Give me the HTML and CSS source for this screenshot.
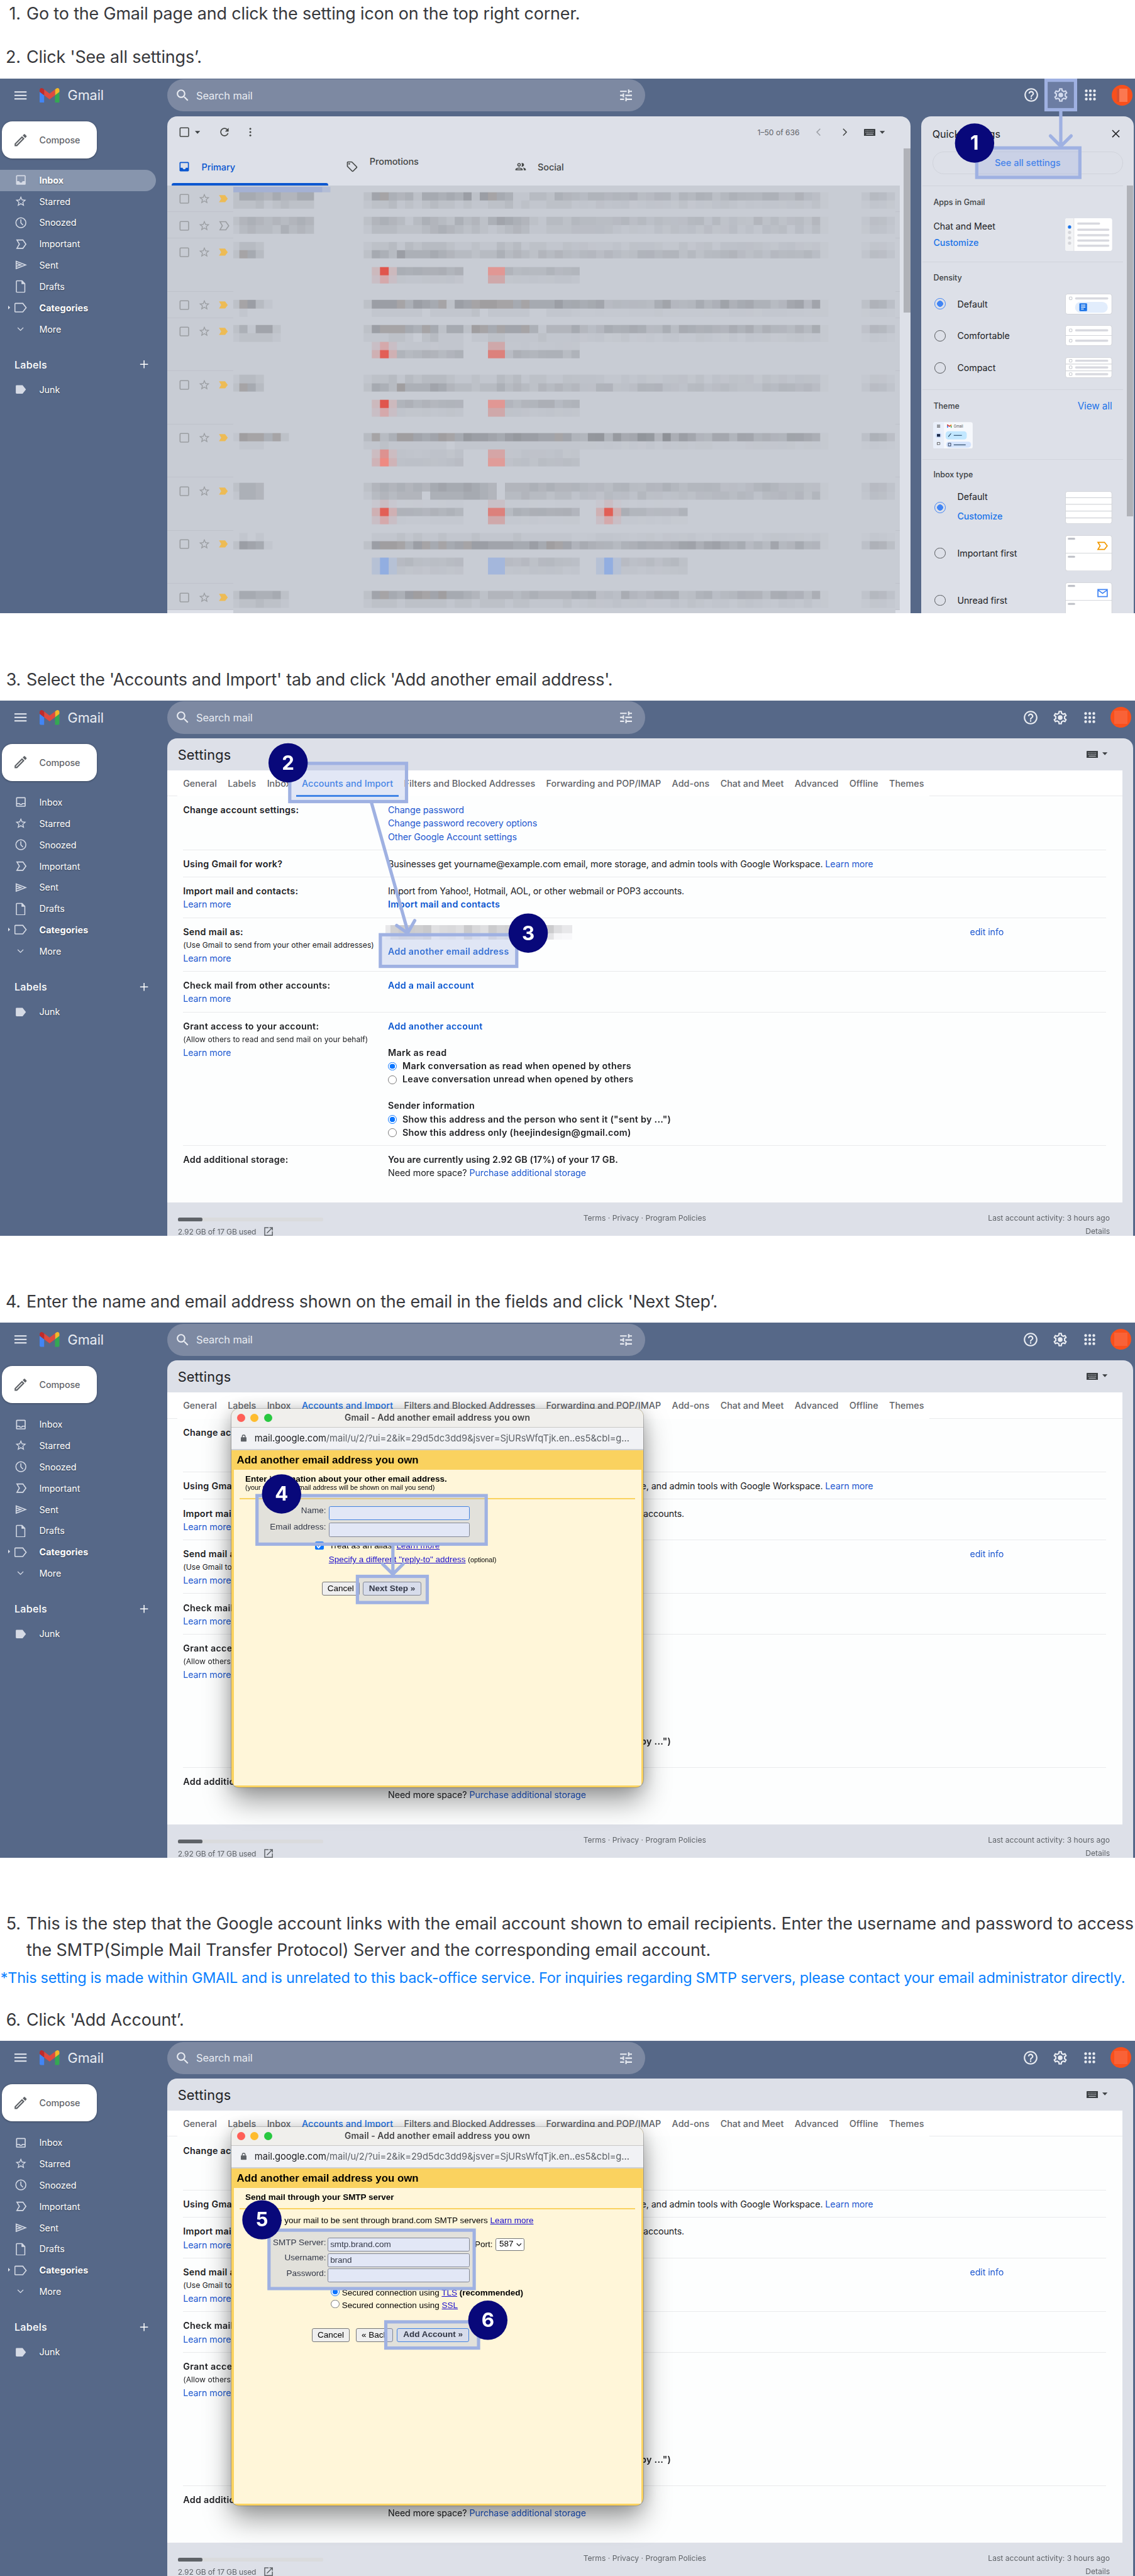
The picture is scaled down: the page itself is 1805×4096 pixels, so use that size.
FILE: index.html
```html
<!DOCTYPE html>
<html lang="en">
<head>
<meta charset="utf-8">
<title>Gmail: send mail as another address</title>
<link rel="stylesheet" href="styles.css">
</head>
<body>

<svg class="sprite" aria-hidden="true">
  <symbol id="i-menu" viewBox="0 0 24 24"><path d="M0 4h24v2.6H0zM0 10.7h24v2.6H0zM0 17.4h24V20H0z"/></symbol>
  <symbol id="i-gmail" viewBox="52 42 88 66"><path fill="#4285f4" d="M58 108h14V74L52 59v43c0 3.32 2.69 6 6 6"/><path fill="#34a853" d="M120 108h14c3.32 0 6-2.69 6-6V59l-20 15"/><path fill="#f3b829" d="M120 48v26l20-15v-8c0-7.42-8.47-11.65-14.4-7.2"/><path fill="#de4a3f" d="M72 74V48l24 18 24-18v26L96 92"/><path fill="#bf2b2b" d="M52 51v8l20 15V48l-5.6-4.2c-5.94-4.45-14.4-.22-14.4 7.2"/></symbol>
  <symbol id="i-search" viewBox="0 0 24 24"><path d="M15.5 14h-.79l-.28-.27C15.41 12.59 16 11.11 16 9.5 16 5.91 13.09 3 9.5 3S3 5.91 3 9.5 5.91 16 9.5 16c1.61 0 3.09-.59 4.23-1.57l.27.28v.79l5 4.99L20.49 19l-4.99-5zm-6 0C7.01 14 5 11.99 5 9.5S7.01 5 9.5 5 14 7.01 14 9.5 11.99 14 9.5 14z"/></symbol>
  <symbol id="i-tune" viewBox="0 0 24 24"><path d="M3 17v2h6v-2H3zM3 5v2h10V5H3zm10 16v-2h8v-2h-8v-2h-2v6h2zM7 9v2H3v2h4v2h2V9H7zm14 4v-2H11v2h10zm-6-4h2V7h4V5h-4V3h-2v6z"/></symbol>
  <symbol id="i-help" viewBox="0 0 24 24"><path d="M11 18h2v-2h-2v2zm1-16C6.48 2 2 6.48 2 12s4.48 10 10 10 10-4.48 10-10S17.52 2 12 2zm0 18c-4.41 0-8-3.59-8-8s3.59-8 8-8 8 3.59 8 8-3.59 8-8 8zm0-14c-2.21 0-4 1.79-4 4h2c0-1.1.9-2 2-2s2 .9 2 2c0 2-3 1.75-3 5h2c0-2.25 3-2.5 3-5 0-2.21-1.79-4-4-4z"/></symbol>
  <symbol id="i-gear" viewBox="0 0 24 24"><path d="M19.43 12.98c.04-.32.07-.64.07-.98 0-.34-.03-.66-.07-.98l2.11-1.65c.19-.15.24-.42.12-.64l-2-3.46c-.09-.16-.26-.25-.44-.25-.06 0-.12.01-.17.03l-2.49 1c-.52-.4-1.08-.73-1.69-.98l-.38-2.65C14.46 2.18 14.25 2 14 2h-4c-.25 0-.46.18-.49.42l-.38 2.65c-.61.25-1.17.59-1.69.98l-2.49-1c-.06-.02-.12-.03-.18-.03-.17 0-.34.09-.43.25l-2 3.46c-.13.22-.07.49.12.64l2.11 1.65c-.04.32-.07.65-.07.98 0 .33.03.66.07.98l-2.11 1.65c-.19.15-.24.42-.12.64l2 3.46c.09.16.26.25.44.25.06 0 .12-.01.17-.03l2.49-1c.52.4 1.08.73 1.69.98l.38 2.65c.03.24.24.42.49.42h4c.25 0 .46-.18.49-.42l.38-2.65c.61-.25 1.17-.59 1.69-.98l2.49 1c.06.02.12.03.18.03.17 0 .34-.09.43-.25l2-3.46c.12-.22.07-.49-.12-.64l-2.11-1.65zm-1.98-1.71c.04.31.05.52.05.73 0 .21-.02.43-.05.73l-.14 1.13.89.7 1.08.84-.7 1.21-1.27-.51-1.04-.42-.9.68c-.43.32-.84.56-1.25.73l-1.06.43-.16 1.13-.2 1.35h-1.4l-.19-1.35-.16-1.13-1.06-.43c-.43-.18-.83-.41-1.23-.71l-.91-.7-1.06.43-1.27.51-.7-1.21 1.08-.84.89-.7-.14-1.13c-.03-.31-.05-.54-.05-.74s.02-.43.05-.73l.14-1.13-.89-.7-1.08-.84.7-1.21 1.27.51 1.04.42.9-.68c.43-.32.84-.56 1.25-.73l1.06-.43.16-1.13.2-1.35h1.39l.19 1.35.16 1.13 1.06.43c.43.18.83.41 1.23.71l.91.7 1.06-.43 1.27-.51.7 1.21-1.07.85-.89.7.14 1.13z"/><circle cx="12" cy="12" r="3.5"/></symbol>
  <symbol id="i-grid" viewBox="0 0 24 24"><circle cx="6" cy="6" r="2"/><circle cx="12" cy="6" r="2"/><circle cx="18" cy="6" r="2"/><circle cx="6" cy="12" r="2"/><circle cx="12" cy="12" r="2"/><circle cx="18" cy="12" r="2"/><circle cx="6" cy="18" r="2"/><circle cx="12" cy="18" r="2"/><circle cx="18" cy="18" r="2"/></symbol>
  <symbol id="i-pencil" viewBox="0 0 24 24"><path d="M14.06 9.02l.92.92L5.92 19H5v-.92l9.06-9.06M17.66 3c-.25 0-.51.1-.7.29l-1.83 1.83 3.75 3.75 1.83-1.83c.39-.39.39-1.02 0-1.41l-2.34-2.34c-.2-.2-.45-.29-.71-.29zm-3.6 3.19L3 17.25V21h3.75L17.81 9.94l-3.75-3.75z"/></symbol>
  <symbol id="i-inbox-fill" viewBox="0 0 24 24"><path d="M19 3H5c-1.1 0-2 .9-2 2v14c0 1.1.9 2 2 2h14c1.1 0 2-.9 2-2V5c0-1.1-.9-2-2-2zm0 11h-4c0 1.66-1.35 3-3 3s-3-1.34-3-3H5V5h14v9z"/></symbol>
  <symbol id="i-inbox" viewBox="0 0 24 24"><path d="M19 3H5c-1.1 0-2 .9-2 2v14c0 1.1.9 2 2 2h14c1.1 0 2-.9 2-2V5c0-1.1-.9-2-2-2zm0 16H5v-3h3.56c.69 1.19 1.97 2 3.45 2s2.75-.81 3.45-2H19v3zm0-5h-4.99c0 1.1-.9 2-2 2s-2-.9-2-2H5V5h14v9z"/></symbol>
  <symbol id="i-star" viewBox="0 0 24 24"><path d="M22 9.24l-7.19-.62L12 2 9.19 8.63 2 9.24l5.46 4.73L5.82 21 12 17.27 18.18 21l-1.63-7.03L22 9.24zM12 15.4l-3.76 2.27 1-4.28-3.32-2.88 4.38-.38L12 6.1l1.71 4.04 4.38.38-3.32 2.88 1 4.28L12 15.4z"/></symbol>
  <symbol id="i-clock" viewBox="0 0 24 24"><g fill="none" stroke="currentColor" stroke-width="1.8"><circle cx="12" cy="12" r="9.3"/><path d="M12 5.5v6.8l4 4"/></g></symbol>
  <symbol id="i-important" viewBox="0 0 24 24"><path fill="none" stroke="currentColor" stroke-width="1.9" d="M4.6 4.2h11.2l5.6 7.8-5.6 7.8H4.6L9.2 12z"/></symbol>
  <symbol id="i-marker" viewBox="0 0 24 24"><path d="M3 4.6h12c.6 0 1 .2 1.4.7L21.4 12l-5 6.7c-.4.5-.8.7-1.4.7H3L7.6 12z"/></symbol>
  <symbol id="i-send" viewBox="0 0 24 24"><path fill="none" stroke="currentColor" stroke-width="1.9" d="M3.2 5.2L21 12 3.2 18.8zM3.2 9.2L12 12l-8.8 2.8"/></symbol>
  <symbol id="i-draft" viewBox="0 0 24 24"><path fill="none" stroke="currentColor" stroke-width="1.8" d="M5 1.8h9.2L19.4 7v15.2a1 1 0 0 1-1 1H4.6a1 1 0 0 1-1-1V2.8a1 1 0 0 1 1-1z"/><path d="M13.2 1.6v6.2h6.4z"/></symbol>
  <symbol id="i-tag" viewBox="0 0 24 24"><path fill="none" stroke="currentColor" stroke-width="1.9" d="M2 4h13.6l6.3 8-6.3 8H2a1.2 1.2 0 0 1-1.2-1.2V5.2A1.2 1.2 0 0 1 2 4z"/></symbol>
  <symbol id="i-tag-fill" viewBox="0 0 24 24"><path d="M4.2 4h11l6.3 8-6.3 8h-11a1.7 1.7 0 0 1-1.7-1.7V5.7A1.7 1.7 0 0 1 4.2 4z"/></symbol>
  <symbol id="i-down" viewBox="0 0 24 24"><path fill="none" stroke="currentColor" stroke-width="2" d="M5 8.5l7 7 7-7"/></symbol>
  <symbol id="i-prev" viewBox="0 0 24 24"><path fill="none" stroke="currentColor" stroke-width="2" d="M15 5l-7 7 7 7"/></symbol>
  <symbol id="i-next" viewBox="0 0 24 24"><path fill="none" stroke="currentColor" stroke-width="2" d="M9 5l7 7-7 7"/></symbol>
  <symbol id="i-plus" viewBox="0 0 24 24"><path d="M10.7 3h2.2v7.9h8v2.2h-8v8h-2.2v-8h-8v-2.2h8z"/></symbol>
  <symbol id="i-close" viewBox="0 0 24 24"><path fill="none" stroke="currentColor" stroke-width="2" d="M5 5l14 14M19 5L5 19"/></symbol>
  <symbol id="i-check" viewBox="0 0 24 24"><rect x="4" y="4" width="16.4" height="16.4" rx="1.5" fill="none" stroke="currentColor" stroke-width="1.9"/></symbol>
  <symbol id="i-refresh" viewBox="0 0 24 24"><path d="M17.65 6.35C16.2 4.9 14.21 4 12 4c-4.42 0-7.99 3.58-7.99 8s3.57 8 7.99 8c3.73 0 6.84-2.55 7.73-6h-2.08c-.82 2.33-3.04 4-5.65 4-3.31 0-6-2.69-6-6s2.69-6 6-6c1.66 0 3.14.69 4.22 1.78L13 11h7V4l-2.35 2.35z"/></symbol>
  <symbol id="i-dots" viewBox="0 0 24 24"><circle cx="12" cy="5" r="2"/><circle cx="12" cy="12" r="2"/><circle cx="12" cy="19" r="2"/></symbol>
  <symbol id="i-promo" viewBox="0 0 24 24"><path d="M21.41 11.58l-9-9C12.05 2.22 11.55 2 11 2H4c-1.1 0-2 .9-2 2v7c0 .55.22 1.05.59 1.42l9 9c.36.36.86.58 1.41.58s1.05-.22 1.41-.59l7-7c.37-.36.59-.86.59-1.41s-.23-1.06-.59-1.42zM13 20.01L4 11V4h7l9 9-7 7.01z"/><circle cx="6.5" cy="6.5" r="1.5"/></symbol>
  <symbol id="i-people" viewBox="0 0 24 24"><path d="M9 13.75c-2.34 0-7 1.17-7 3.5V19h14v-1.75c0-2.33-4.66-3.5-7-3.5zM4.34 17c.84-.58 2.87-1.25 4.66-1.25s3.82.67 4.66 1.25H4.34zM9 12c1.93 0 3.5-1.57 3.5-3.5S10.93 5 9 5 5.5 6.57 5.5 8.5 7.07 12 9 12zm0-5c.83 0 1.5.67 1.5 1.5S9.83 10 9 10s-1.5-.67-1.5-1.5S8.17 7 9 7zm7.04 6.81c1.16.84 1.96 1.96 1.96 3.44V19h4v-1.75c0-2.02-3.5-3.17-5.96-3.44zM15 12c1.93 0 3.5-1.57 3.5-3.5S16.93 5 15 5c-.54 0-1.04.13-1.5.35.63.89 1 1.98 1 3.15s-.37 2.26-1 3.15c.46.22.96.35 1.5.35z"/></symbol>
  <symbol id="i-keyboard" viewBox="0 0 21 13"><rect width="21" height="13" rx="1"/><path stroke="#dde0e8" stroke-width="1.3" stroke-dasharray="1.3 1.3" d="M3 3.5h15M3 6.3h15"/><path stroke="#dde0e8" stroke-width="1.2" d="M4 9.6h13"/></symbol>
  <symbol id="i-caret" viewBox="0 0 10 6"><path d="M0 0h10L5 5.6z"/></symbol>
  <symbol id="i-open" viewBox="0 0 24 24"><path d="M19 19H5V5h7V3H3v18h18v-9h-2v7zM14 3v2h3.6l-9.8 9.8 1.4 1.4L19 6.4V10h2V3h-7z"/></symbol>
  <symbol id="i-lock" viewBox="0 0 12 15"><rect y="5.5" width="12" height="9" rx="1.3"/><path fill="none" stroke="currentColor" stroke-width="1.8" d="M3 6V3.8a3 3 0 0 1 6 0V6"/></symbol>
</svg>

<template id="topbar">
  <header class="topbar">
    <div class="brand">
      <svg class="menu"><use href="#i-menu"/></svg>
      <svg class="logo"><use href="#i-gmail"/></svg>
      <span class="wordmark">Gmail</span>
    </div>
    <div class="search">
      <svg class="search-icon"><use href="#i-search"/></svg>
      <span class="search-text">Search mail</span>
      <svg class="tune"><use href="#i-tune"/></svg>
    </div>
    <div class="tools">
      <svg class="tool"><use href="#i-help"/></svg>
      <svg class="tool"><use href="#i-gear"/></svg>
      <svg class="tool"><use href="#i-grid"/></svg>
      <span class="avatar"><i class="avatar-blur"></i></span>
    </div>
  </header>
</template>

<template id="sidebar">
  <nav class="sidebar">
    <div class="compose"><svg class="pencil"><use href="#i-pencil"/></svg>Compose</div>
    <div class="folder folder-inbox"><svg class="f-icon f-on"><use href="#i-inbox-fill"/></svg><svg class="f-icon f-off"><use href="#i-inbox"/></svg>Inbox</div>
    <div class="folder"><svg class="f-icon"><use href="#i-star"/></svg>Starred</div>
    <div class="folder"><svg class="f-icon"><use href="#i-clock"/></svg>Snoozed</div>
    <div class="folder"><svg class="f-icon"><use href="#i-important"/></svg>Important</div>
    <div class="folder"><svg class="f-icon"><use href="#i-send"/></svg>Sent</div>
    <div class="folder"><svg class="f-icon"><use href="#i-draft"/></svg>Drafts</div>
    <div class="folder folder-cat"><i class="expander"></i><svg class="f-icon"><use href="#i-tag"/></svg>Categories</div>
    <div class="folder"><svg class="f-icon f-small"><use href="#i-down"/></svg>More</div>
    <div class="labels-head"><span>Labels</span><svg class="plus"><use href="#i-plus"/></svg></div>
    <div class="folder"><svg class="f-icon"><use href="#i-tag-fill"/></svg>Junk</div>
  </nav>
</template>

<template id="settings">
  <main class="panel settings">
    <div class="settings-head"><h2 class="settings-title">Settings</h2><svg class="keyboard"><use href="#i-keyboard"/></svg><svg class="caret caret-up"><use href="#i-caret"/></svg></div>
    <div class="sheet">
      <div class="tabs"><div class="tablist"><span>General</span><span>Labels</span><span>Inbox</span><span class="tab-on">Accounts and Import</span><span>Filters and Blocked Addresses</span><span>Forwarding and POP/IMAP</span><span>Add-ons</span><span>Chat and Meet</span><span>Advanced</span><span>Offline</span><span>Themes</span></div></div>
      <div class="row">
        <div><b>Change account settings:</b></div>
        <div><a>Change password</a><a>Change password recovery options</a><a>Other Google Account settings</a></div>
      </div>
      <div class="row">
        <div><b>Using Gmail for work?</b></div>
        <div><p>Businesses get yourname@example.com email, more storage, and admin tools with Google Workspace. <a>Learn more</a></p></div>
      </div>
      <div class="row">
        <div><b>Import mail and contacts:</b><a>Learn more</a></div>
        <div><p>Import from Yahoo!, Hotmail, AOL, or other webmail or POP3 accounts.</p><a class="strong">Import mail and contacts</a></div>
      </div>
      <div class="row">
        <div><b>Send mail as:</b><small>(Use Gmail to send from your other email addresses)</small><a>Learn more</a></div>
        <div class="send-as"><div><canvas class="strip" width="343" height="27"></canvas><a class="strong">Add another email address</a></div><a>edit info</a></div>
      </div>
      <div class="row">
        <div><b>Check mail from other accounts:</b><a>Learn more</a></div>
        <div><a class="strong">Add a mail account</a></div>
      </div>
      <div class="row">
        <div><b>Grant access to your account:</b><small>(Allow others to read and send mail on your behalf)</small><a>Learn more</a></div>
        <div>
          <a class="strong">Add another account</a>
          <b class="group">Mark as read</b>
          <b class="option"><i class="radio radio-on"></i>Mark conversation as read when opened by others</b>
          <b class="option"><i class="radio"></i>Leave conversation unread when opened by others</b>
          <b class="group">Sender information</b>
          <b class="option"><i class="radio radio-on"></i>Show this address and the person who sent it ("sent by ...")</b>
          <b class="option"><i class="radio"></i>Show this address only (heejindesign@gmail.com)</b>
        </div>
      </div>
      <div class="row row-last">
        <div><b>Add additional storage:</b></div>
        <div><b class="quota">You are currently using 2.92 GB (17%) of your 17 GB.</b><p>Need more space? <a>Purchase additional storage</a></p></div>
      </div>
    </div>
    <footer class="foot">
      <div class="usage"><div class="bar"><i class="bar-fill"></i></div><span class="used">2.92 GB of 17 GB used</span><svg class="open"><use href="#i-open"/></svg></div>
      <div class="terms">Terms · Privacy · Program Policies</div>
      <div class="activity"><span>Last account activity: 3 hours ago</span><span>Details</span></div>
    </footer>
  </main>
</template>

<template id="popup-bars">
  <div class="p-title"><i class="dot dot-r"></i><i class="dot dot-y"></i><i class="dot dot-g"></i><span>Gmail - Add another email address you own</span></div>
  <div class="p-url"><svg class="lock"><use href="#i-lock"/></svg><span><b>mail.google.com</b>/mail/u/2/?ui=2&amp;ik=29d5dc3dd9&amp;jsver=SjURsWfqTjk.en..es5&amp;cbl=g...</span></div>
  <div class="p-head">Add another email address you own</div>
</template>

<p class="step s1"><span class="num">1.</span>Go to the Gmail page and click the setting icon on the top right corner.</p>
<p class="step s2"><span class="num">2.</span>Click 'See all settings’.</p>

<section class="shot shot-inbox">
  <div data-include="topbar"></div>
  <div class="body">
    <div data-include="sidebar"></div>
    <main class="panel mail">
      <div class="toolbar">
        <svg class="tb-icon"><use href="#i-check"/></svg><svg class="caret tb-caret"><use href="#i-caret"/></svg>
        <svg class="tb-icon tb-refresh"><use href="#i-refresh"/></svg><svg class="tb-icon tb-more"><use href="#i-dots"/></svg>
        <span class="pager">1–50 of 636</span>
        <svg class="tb-icon tb-prev"><use href="#i-prev"/></svg><svg class="tb-icon tb-next"><use href="#i-next"/></svg>
        <svg class="keyboard"><use href="#i-keyboard"/></svg><svg class="caret"><use href="#i-caret"/></svg>
      </div>
      <div class="mail-body">
        <div class="mail-col">
          <div class="cats">
            <div class="cat cat-on"><svg class="cat-icon"><use href="#i-inbox-fill"/></svg><span>Primary</span></div>
            <div class="cat cat-promo"><svg class="cat-icon"><use href="#i-promo"/></svg><span>Promotions</span></div>
            <div class="cat"><svg class="cat-icon"><use href="#i-people"/></svg><span>Social</span></div>
          </div>
          <div class="list" id="list"><canvas class="mosaic" width="1214" height="782"></canvas></div>
        </div>
        <i class="thumb"></i>
      </div>
    </main>
    <aside class="panel quick">
      <div class="q-head"><span>Quick settings</span><svg class="close"><use href="#i-close"/></svg></div>
      <div class="q-all">See all settings</div>
      <div class="q-body">
        <div class="q-sections">
          <div class="q-sec">
            <h3>Apps in Gmail</h3>
            <div class="q-row q-apps"><div class="q-two"><span>Chat and Meet</span><a>Customize</a></div>
              <svg class="pic" viewBox="0 0 86 60"><rect width="86" height="60" rx="4" fill="#fff"/><path fill="#f3f4f6" d="M4 0h12v60H4a4 4 0 0 1-4-4V4a4 4 0 0 1 4-4z"/><path stroke="#dcdde2" d="M16 0v60"/><circle cx="8" cy="16" r="3" fill="#1a73e8"/><g fill="#d5d6da"><circle cx="8" cy="26" r="3"/><circle cx="8" cy="36" r="3"/><circle cx="8" cy="45.5" r="3"/></g><path stroke="#d8d9df" stroke-width="4" stroke-linecap="round" d="M24 9.8h38M24 21h55M24 31h55M24 41h55M24 50.5h55"/></svg></div>
          </div>
          <div class="q-sec q-density">
            <h3>Density</h3>
            <div class="q-row"><i class="q-radio q-on"></i><span>Default</span>
              <svg class="pic" viewBox="0 0 86 38"><rect x=".5" y=".5" width="85" height="37" rx="4" fill="#fff" stroke="#cdd0d6"/><rect x="7.5" y="6" width="5" height="5" rx="1" fill="none" stroke="#b9bcc3"/><path stroke="#d8d9df" stroke-width="4" stroke-linecap="round" d="M20 8.7h57"/><rect x="18" y="15" width="60" height="20" rx="10" fill="#e2edfc"/><rect x="26" y="17.5" width="14" height="14.5" rx="1.5" fill="#1a73e8"/><path stroke="#fff" stroke-width="1.5" d="M29 21h8M29 24.5h8M29 28h5"/></svg></div>
            <div class="q-row"><i class="q-radio"></i><span>Comfortable</span>
              <svg class="pic" viewBox="0 0 86 38"><rect x=".5" y=".5" width="85" height="37" rx="4" fill="#fff" stroke="#cdd0d6"/><path stroke="#cdd0d6" d="M0 19h86"/><rect x="7.5" y="7" width="5" height="5" rx="1" fill="none" stroke="#b9bcc3"/><rect x="7.5" y="26" width="5" height="5" rx="1" fill="none" stroke="#b9bcc3"/><path stroke="#d8d9df" stroke-width="4" stroke-linecap="round" d="M20 9.5h57M20 28.5h57"/></svg></div>
            <div class="q-row"><i class="q-radio"></i><span>Compact</span>
              <svg class="pic" viewBox="0 0 86 38"><rect x=".5" y=".5" width="85" height="37" rx="4" fill="#fff" stroke="#cdd0d6"/><path stroke="#d3d5da" stroke-width="1.5" d="M0 12.5h86M0 25h86"/><g fill="none" stroke="#b9bcc3"><rect x="7.5" y="4" width="5" height="5" rx="1"/><rect x="7.5" y="16" width="5" height="5" rx="1"/><rect x="7.5" y="28.5" width="5" height="5" rx="1"/></g><path stroke="#d8d9df" stroke-width="4" stroke-linecap="round" d="M20 6.5h57M20 18.7h57M20 31h57"/></svg></div>
          </div>
          <div class="q-sec q-theme">
            <div class="q-theme-head"><h3>Theme</h3><a>View all</a></div>
            <svg class="theme-pic" viewBox="0 0 73 49"><rect width="73" height="49" rx="4" fill="#f6f8fc"/><path fill="#e9effa" d="M4 0h16v49H4a4 4 0 0 1-4-4V4a4 4 0 0 1 4-4z"/><path stroke="#444" d="M7 5.5h6M7 7.5h6M7 9.5h6"/><rect x="4" y="20" width="12" height="9" rx="4.5" fill="#d3e3fd"/><rect x="7" y="22" width="6" height="5" fill="#1b2a4a"/><path fill="none" stroke="#555" d="M7.5 42v-4.5h5v4h-5"/><svg x="25.5" y="4" width="9" height="7"><use href="#i-gmail"/></svg><text x="38" y="10" font-size="6.5" font-family="Inter, sans-serif" fill="#555">Gmail</text><rect x="23" y="17" width="39" height="15" rx="5" fill="#c2e7ff"/><path stroke="#1b3b5a" stroke-width="1.3" d="M28 27l5-6M38 24.5h15"/><rect x="24" y="36" width="46" height="11" rx="5.5" fill="#d3e3fd"/><rect x="28" y="39" width="4.5" height="5" fill="none" stroke="#1b2a4a"/><path stroke="#1b3b5a" stroke-width="1.3" d="M38 42h22"/></svg>
          </div>
          <div class="q-sec q-type">
            <h3>Inbox type</h3>
            <div class="q-row q-row-two"><i class="q-radio q-on"></i><div class="q-two q-two-wide"><span>Default</span><a>Customize</a></div>
              <svg class="pic" viewBox="0 0 86 60"><rect x=".5" y=".5" width="85" height="59" rx="4" fill="#fff" stroke="#cdd0d6"/><path stroke="#d3d5da" stroke-width="1.5" d="M0 12h86M0 24h86M0 36.5h86M0 49h86"/></svg></div>
            <div class="q-row"><i class="q-radio"></i><span>Important first</span>
              <svg class="pic" viewBox="0 0 86 66"><rect x=".5" y=".5" width="85" height="65" rx="4" fill="#fff" stroke="#cdd0d6"/><path stroke="#cdd0d6" d="M0 33h86"/><path stroke="#bfc1c8" stroke-width="3.5" stroke-linecap="round" d="M6.5 6.5h10M6.5 39.5h10"/><path fill="none" stroke="#f29900" stroke-width="2" d="M60 13h12l5 6.5-5 6.5H60l4-6.5z"/></svg></div>
            <div class="q-row"><i class="q-radio"></i><span>Unread first</span>
              <svg class="pic" viewBox="0 0 86 66"><rect x=".5" y=".5" width="85" height="65" rx="4" fill="#fff" stroke="#cdd0d6"/><path stroke="#cdd0d6" d="M0 33h86"/><path stroke="#bfc1c8" stroke-width="3.5" stroke-linecap="round" d="M6.5 6.5h10M6.5 39.5h10"/><path fill="none" stroke="#4285f4" stroke-width="2" d="M60 13h17v13H60zM60 14l8.5 6 8.5-6"/></svg></div>
          </div>
        </div>
        <i class="q-thumb"></i>
      </div>
    </aside>
  </div>
  <svg class="notes" viewBox="0 0 2080 980">
    <rect class="mark" x="1917" y="3" width="54" height="54"/>
    <path class="arrow" d="M1944 60v64M1925 105l19 19 19-19"/>
    <rect class="mark" x="1790" y="127" width="189" height="54"/>
    <circle cx="1786" cy="118" r="36"/><text x="1786" y="130.5">1</text>
  </svg>
</section>

<p class="step s3"><span class="num">3.</span>Select the 'Accounts and Import' tab and click 'Add another email address'.</p>

<section class="shot">
  <div data-include="topbar"></div>
  <div class="body"><div data-include="sidebar"></div><div data-include="settings"></div></div>
  <svg class="notes" viewBox="0 0 2080 980">
    <rect class="mark" x="531" y="115" width="214" height="70"/>
    <path class="arrow" d="M681 188l66 234M727 412l20 14 13-23"/>
    <rect class="mark" x="697" y="429" width="250" height="58"/>
    <circle cx="528" cy="114" r="36"/><text x="528" y="126.5">2</text>
    <circle cx="968" cy="426" r="36"/><text x="968" y="438.5">3</text>
  </svg>
</section>

<p class="step s4"><span class="num">4.</span>Enter the name and email address shown on the email in the fields and click 'Next Step’.</p>

<section class="shot">
  <div data-include="topbar"></div>
  <div class="body"><div data-include="sidebar"></div><div data-include="settings"></div></div>
  <div class="popup">
    <div data-include="popup-bars"></div>
    <div class="p-body">
      <div class="p-intro"><b>Enter information about your other email address.</b><small>(your name and email address will be shown on mail you send)</small></div>
      <hr class="p-rule">
      <div class="form form-id">
        <label>Name:</label><i class="field field-on"></i>
        <label>Email address:</label><i class="field"></i>
      </div>
      <div class="alias"><i class="checkbox"><svg viewBox="0 0 16 16"><path fill="none" stroke="#fff" stroke-width="2.2" d="M3.5 8.5l3 3 6-7"/></svg></i><span>Treat as an alias. <u>Learn more</u></span></div>
      <div class="reply"><u>Specify a different "reply-to" address</u> <small>(optional)</small></div>
      <div class="btns btns-next"><span class="btn btn-cancel">Cancel</span><span class="btn btn-next">Next Step »</span></div>
    </div>
  </div>
  <svg class="notes" viewBox="0 0 2080 980">
    <rect class="mark" x="471" y="317" width="420" height="89"/>
    <path class="arrow" d="M720 409v51M701 442l19 19 19-19"/>
    <rect class="mark" x="655" y="465" width="128" height="48"/>
    <circle cx="516" cy="314" r="36"/><text x="516" y="326.5">4</text>
  </svg>
</section>

<p class="step s5"><span class="num">5.</span>This is the step that the Google account links with the email account shown to email recipients. Enter the username and password to access<br>the SMTP(Simple Mail Transfer Protocol) Server and the corresponding email account.</p>
<p class="aside">*This setting is made within GMAIL and is unrelated to this back-office service. For inquiries regarding SMTP servers, please contact your email administrator directly.</p>
<p class="step s6"><span class="num">6.</span>Click 'Add Account’.</p>

<section class="shot">
  <div data-include="topbar"></div>
  <div class="body"><div data-include="sidebar"></div><div data-include="settings"></div></div>
  <div class="popup">
    <div data-include="popup-bars"></div>
    <div class="p-body">
      <div class="p-intro"><b>Send mail through your SMTP server</b></div>
      <hr class="p-rule p-rule-near">
      <p class="p-config">Configure your mail to be sent through brand.com SMTP servers <u>Learn more</u></p>
      <div class="form form-smtp">
        <label>SMTP Server:</label><i class="field">smtp.brand.com</i><span class="port">Port:<i class="select">587<svg viewBox="0 0 12 8"><path fill="none" stroke="#222" stroke-width="1.8" d="M1 1.5l5 5 5-5"/></svg></i></span>
        <label>Username:</label><i class="field">brand</i><span></span>
        <label>Password:</label><i class="field"></i><span></span>
      </div>
      <div class="secure secure-first"><i class="radio radio-big radio-on"></i><span>Secured connection using <u>TLS</u> <b>(recommended)</b></span></div>
      <div class="secure"><i class="radio radio-big"></i><span>Secured connection using <u>SSL</u></span></div>
      <div class="btns btns-add"><span class="btn btn-cancel">Cancel</span><span class="btn btn-back">« Back</span><span class="btn btn-add">Add Account »</span></div>
    </div>
  </div>
  <svg class="notes" viewBox="0 0 2080 980">
    <rect class="mark" x="493" y="347" width="376" height="107"/>
    <rect class="mark" x="707" y="515" width="170" height="48"/>
    <circle cx="480" cy="328" r="36"/><text x="480" y="340.5">5</text>
    <circle cx="894" cy="512" r="36"/><text x="894" y="524.5">6</text>
  </svg>
</section>

<script src="page.js"></script>
</body>
</html>
```
FILE: styles.css
```css
/* 1rem = 10 units of a 2080-unit wide page */
html { font-size: calc(100vw / 208); }
* { box-sizing: border-box; }
body { margin: 0; background: #fff; font-family: Inter, "Liberation Sans", sans-serif; color: #202124; overflow-x: hidden; }
i { font-style: normal; }
svg { display: block; flex: none; fill: currentColor; }
p, h2, h3 { margin: 0; font-weight: 400; }
.sprite { position: absolute; width: 0; height: 0; }

/* instructions */
.step { padding: .12rem 0 0 4.84rem; font-size: 3.1rem; line-height: 4.8rem; letter-spacing: -.016rem; color: #37383c; white-space: nowrap; }
.num { display: inline-block; width: 4.84rem; margin-left: -4.84rem; padding-right: 1.05rem; text-align: right; }
.s1 { height: 4.8rem; }
.s2 { height: 4.8rem; margin: 3.2rem 0 1.6rem; }
.s3, .s4 { height: 4.8rem; margin: 9.6rem 0 1.6rem; }
.s3 { letter-spacing: -.029rem; }
.s4 { letter-spacing: -.018rem; }
.s5 { height: 9.6rem; margin-top: 9.6rem; letter-spacing: -.0117rem; }
.s6 { height: 4.8rem; margin: 3.2rem 0 1.6rem; }
.aside { height: 4.8rem; padding: .45rem 0 0 .1rem; font-size: 2.7rem; line-height: 4.8rem; letter-spacing: -.031rem; color: #0a80ff; white-space: nowrap; }

/* screenshot frame */
.shot { position: relative; display: flex; flex-direction: column; height: 98rem; background: #566888; overflow: hidden; }
.body { display: flex; flex: 1; min-height: 0; }
.notes { position: absolute; inset: 0; width: 208rem; height: 98rem; font: 700 36px Inter, sans-serif; text-anchor: middle; }
.notes circle { fill: #08087a; }
.notes text { fill: #fff; }
.mark { fill: #9fb1e2; fill-opacity: .3; stroke: #9fb1e2; stroke-width: 6; }
.arrow { fill: none; stroke: #9fb1e2; stroke-width: 6; stroke-linecap: round; }

/* top bar */
.topbar { display: flex; flex: none; align-items: center; height: 6.9rem; padding-bottom: .8rem; color: #e9ecf2; }
.brand { display: flex; align-items: center; width: 30.6rem; padding-left: 2.65rem; }
.menu { width: 2.25rem; height: 2.25rem; }
.logo { width: 3.65rem; height: 2.74rem; margin: 0 1.45rem 0 2.4rem; }
.wordmark { font-size: 2.5rem; letter-spacing: -.01rem; }
.search { display: flex; align-items: center; width: 87.6rem; height: 5.9rem; margin-top: .1rem; padding: 0 2rem 0 1.4rem; border-radius: 3rem; background: #7d89a2; }
.search-icon { width: 2.9rem; height: 2.9rem; }
.search-text { flex: 1; padding-left: 1.05rem; font-size: 1.9rem; letter-spacing: -.012rem; }
.tune { width: 2.9rem; height: 2.9rem; }
.tools { display: flex; align-items: center; gap: 2.4rem; margin-left: auto; padding-right: .65rem; }
.shot-inbox .tools { padding-right: .5rem; }
.tool { width: 3rem; height: 3rem; }
.avatar { display: flex; align-items: center; justify-content: center; width: 3.8rem; height: 3.8rem; border-radius: 50%; background: #f8501c; }
.avatar-blur { width: 2.4rem; height: 2.4rem; background: #f96237; }
.shot-inbox .avatar-blur { width: 2rem; background: linear-gradient(90deg, #d9502f 25%, #fb7850 25%); }

/* sidebar */
.sidebar { width: 30.6rem; padding-top: 1rem; color: #fff; font-size: 1.65rem; }
.compose { display: flex; align-items: center; width: 17.3rem; height: 6.8rem; margin: 0 0 2rem .4rem; padding-left: 1.9rem; border-radius: 1.9rem; background: #fff; color: #5f6368; font-weight: 500; letter-spacing: -.007rem; box-shadow: 0 .1rem .3rem rgba(0,0,0,.3); }
.pencil { width: 2.95rem; height: 2.95rem; margin-right: 1.95rem; }
.folder { position: relative; display: flex; align-items: center; height: 3.9rem; padding: 0 0 .1rem 2.6rem; text-shadow: 0 .15rem .2rem rgba(0,0,0,.4); letter-spacing: -.005rem; }
.f-icon { width: 2.35rem; height: 2.35rem; margin-right: 2.25rem; color: #d5dae5; }
.f-small { width: 1.75rem; margin: 0 2.55rem 0 .3rem; }
.f-on { display: none; }
.shot-inbox .f-on { display: block; }
.shot-inbox .f-off { display: none; }
.shot-inbox .folder-inbox { width: 28.6rem; border-radius: 0 1.95rem 1.95rem 0; background: #8795ad; font-weight: 700; }
.folder-cat { font-weight: 700; letter-spacing: .015rem; }
.expander { position: absolute; left: 1.45rem; top: 1.5rem; border: .45rem solid transparent; border-left-color: #e3e6ee; border-right: 0; }
.labels-head { display: flex; align-items: center; justify-content: space-between; height: 3.9rem; margin: 2.55rem 3.2rem .75rem 0; padding-left: 2.65rem; font-size: 1.85rem; font-weight: 500; letter-spacing: .035rem; }
.plus { width: 1.9rem; height: 1.9rem; }

/* panels */
.panel { display: flex; flex-direction: column; border-radius: 1.8rem 1.8rem 0 0; background: #dde0e8; overflow: hidden; }
.caret { width: .95rem; height: .6rem; color: #3c4043; }
.keyboard { width: 2.1rem; height: 1.3rem; margin-right: .8rem; color: #3c4043; }

/* inbox */
.mail { width: 136.28rem; }
.toolbar { display: flex; flex: none; align-items: center; height: 5.87rem; padding: 0 4.7rem 0 2.02rem; color: #444746; }
.tb-icon { width: 2.3rem; height: 2.3rem; }
.tb-caret { margin-left: .8rem; }
.tb-refresh { margin-left: 3.3rem; }
.tb-more { margin-left: 2.6rem; width: 2.1rem; }
.pager { margin-left: auto; font-size: 1.4rem; color: #5f6368; }
.tb-prev { margin-left: 2.5rem; width: 2.1rem; height: 2.1rem; color: #9da0a6; }
.tb-next { margin: 0 2.5rem 0 2.6rem; width: 2.1rem; height: 2.1rem; }
.mail-body { display: flex; flex: 1; min-height: 0; }
.mail-col { width: 134.35rem; }
.cats { display: flex; height: 6.8rem; font-size: 1.67rem; font-weight: 500; letter-spacing: -.01rem; color: #444746; }
.cat { position: relative; display: flex; align-items: center; width: 30.8rem; padding-left: 2.02rem; }
.cat-icon { width: 2.3rem; height: 2.3rem; margin-right: 2.02rem; }
.cat-promo span { padding-bottom: 2rem; }
.cat-on { color: #0b57d0; }
.cat-on::after { content: ""; position: absolute; left: .9rem; bottom: 0; width: 28.66rem; height: .38rem; border-radius: .4rem .4rem 0 0; background: #0b57d0; }
.list { position: relative; background: #c8ccd4; }
.mosaic { position: absolute; left: 12.1rem; top: .3rem; width: 121.4rem; height: 78.2rem; }
.msg { display: flex; gap: 1.33rem; height: 4.867rem; padding: 1.33rem 0 0 2.02rem; border-bottom: .15rem solid #bfc2cb; color: #9a9da1; }
.msg-tall { height: 9.733rem; }
.msg svg { width: 2.3rem; height: 2.3rem; }
.msg .hot { color: #edbb55; width: 2.1rem; }
.thumb { width: 1.28rem; height: 30.1rem; margin-left: .65rem; background: #b0b2b8; }

/* quick settings */
.quick { width: 38.88rem; margin-left: 1.98rem; font-size: 1.64rem; }
.q-head { display: flex; flex: none; align-items: center; justify-content: space-between; height: 6.44rem; padding: 0 2.1rem 0 2rem; font-size: 1.86rem; }
.close { width: 2.2rem; height: 2.2rem; }
.q-all { display: flex; flex: none; align-items: center; justify-content: center; height: 4.22rem; margin: 0 1.94rem 2.07rem 2rem; border: .15rem solid #d0d3db; border-radius: 2.1rem; color: #1a6fee; font-weight: 500; font-size: 1.67rem; }
.q-body { display: flex; }
.q-sections { width: 36.7rem; margin-left: .2rem; }
.q-sec { padding: 1.9rem 1.95rem 0 2rem; border-top: .15rem solid #d1d4dc; height: 13.91rem; }
.q-sec h3 { font-size: 1.44rem; font-weight: 500; line-height: 2rem; color: #3c4043; }
.q-sec a { color: #1a73e8; font-weight: 500; letter-spacing: -.005rem; }
.q-row { display: flex; align-items: center; }
.pic { width: 8.6rem; margin-left: auto; }
.q-apps { margin-top: 1.9rem; }
.q-two { display: flex; flex-direction: column; line-height: 3.1rem; }
.q-two-wide { line-height: 3.47rem; }
.q-density { height: 23.36rem; }
.q-density .q-row { height: 5.85rem; }
.q-density h3 { margin-bottom: .8rem; }
.q-radio { width: 2.05rem; height: 2.05rem; margin: 0 2.13rem 0 .2rem; border: .22rem solid #55585c; border-radius: 50%; }
.q-on { border-color: #4285f4; background: radial-gradient(#4285f4 0 .53rem, transparent .58rem); }
.q-theme { height: 12.8rem; }
.q-theme-head { display: flex; justify-content: space-between; align-items: center; height: 2.1rem; margin-bottom: 1.9rem; }
.q-theme-head a { font-weight: 400; font-size: 1.75rem; }
.theme-pic { width: 7.25rem; height: 4.9rem; }
.q-type { height: auto; padding-top: 1.8rem; }
.q-type .q-row { margin-top: 2.05rem; }
.q-row-two { height: 5.95rem; }
.q-two-wide { margin-top: -.4rem; }
.q-thumb { width: 1.05rem; height: 60.6rem; margin-left: .8rem; background: #b0b2b8; }

/* settings */
.settings { width: 177rem; }
.settings-head { display: flex; flex: none; align-items: center; height: 5.88rem; padding: 0 4.6rem 0 1.97rem; }
.settings-title { flex: 1; font-size: 2.5rem; letter-spacing: .025rem; }
.caret-up { margin-bottom: .2rem; }
.sheet { flex: none; height: 79.12rem; margin-right: 1.95rem; background: #fdfefe; font-size: 1.65rem; line-height: 2.433rem; letter-spacing: -.011rem; }
.tabs { height: 4.75rem; border-bottom: .15rem solid #e9eaec; background: #fff; }
.tablist { display: inline-flex; gap: 2rem; height: 4.75rem; margin-left: 1.95rem; padding: 0 1rem; background: #fff; color: #5f6368; font-weight: 500; line-height: 4.75rem; letter-spacing: .007rem; }
.tab-on { position: relative; color: #1a73e8; letter-spacing: .016rem; }
.tab-on::after { content: ""; position: absolute; left: -1rem; right: -1rem; bottom: -.05rem; height: .28rem; background: #1a73e8; }
.row { display: grid; grid-template-columns: 37.54rem 1fr; margin: 0 2.9rem 0 2.96rem; padding: 1.28rem 0 1.17rem; border-bottom: .15rem solid #e9eaec; }
.row > div { display: flex; flex-direction: column; align-items: flex-start; white-space: nowrap; }
.row b, .strong { font-weight: 600; letter-spacing: .035rem; }
.row a { color: #1f59d0; }
.row small { font-size: 1.4rem; letter-spacing: .003rem; }
.row .strong { color: #0b57d0; }
.row > .send-as { flex-direction: row; }
.send-as > div { display: flex; flex-direction: column; width: 106.65rem; }
.strip { width: 34.3rem; height: 2.7rem; margin: 0 0 .9rem -.5rem; }
.group { margin-top: 2.433rem; }
.option { display: flex; align-items: center; }
.row .quota { letter-spacing: .012rem; }
.radio { width: 1.6rem; height: 1.6rem; margin: .2rem 1.05rem 0 0; border: .13rem solid #767676; border-radius: 50%; background: #fff; }
.radio-on { border-color: #0a75ff; background: radial-gradient(#0a75ff 0 .47rem, #fff .52rem); }
.row-last { border: 0; }
.foot { display: flex; flex: none; height: 6.1rem; padding: 2.75rem 4.2rem 0 1.97rem; font-size: 1.4rem; line-height: 2.4rem; color: #5f6368; }
.usage { display: flex; flex-wrap: wrap; align-content: flex-start; width: 74.33rem; }
.bar { width: 26.7rem; height: .76rem; margin-right: 40rem; border-radius: .3rem; background: #dadbdd; }
.bar-fill { display: block; width: 17%; height: .76rem; border-radius: .3rem; background: #5f6368; }
.used { margin-top: .8rem; letter-spacing: -.02rem; }
.open { width: 2.1rem; height: 2.1rem; margin: .8rem 0 0 1.2rem; }
.terms, .activity { margin-top: -1rem; }
.activity { display: flex; flex-direction: column; align-items: flex-end; margin-left: auto; }

/* browser popup */
.popup { position: absolute; left: 42.45rem; top: 15.7rem; display: flex; flex-direction: column; width: 75.4rem; height: 69.4rem; border-radius: 1.4rem; background: #fad25f; overflow: hidden; box-shadow: 0 0 0 .1rem rgba(0,0,0,.25), 0 2.5rem 5rem rgba(0,0,0,.38), 0 0 3rem rgba(0,0,0,.16); color: #000; font: 1.555rem "Liberation Sans", Arial, sans-serif; }
.p-title { position: relative; display: flex; align-items: center; gap: .95rem; height: 3.5rem; padding-left: 1rem; background: #f0efec; border-bottom: .15rem solid #c9c8c6; }
.p-title span { position: absolute; inset: 0; text-align: center; font: 600 1.6rem/3.4rem Inter, sans-serif; letter-spacing: .01rem; color: #454547; }
.dot { width: 1.5rem; height: 1.5rem; border-radius: 50%; }
.dot-r { background: #ff5f57; }
.dot-y { background: #febc2e; }
.dot-g { background: #28c840; }
.p-url { display: flex; align-items: center; height: 4.1rem; padding-left: 1.7rem; background: #f1f2f5; border-bottom: .25rem solid #ced0d4; color: #5f6368; font: 1.7rem Inter, sans-serif; letter-spacing: -.0077rem; }
.p-url b { font-weight: 400; color: #202124; }
.lock { width: 1.05rem; height: 1.35rem; margin-right: 1.45rem; }
.p-head { height: 3.6rem; padding-left: .95rem; font-size: 1.94rem; font-weight: 700; line-height: 3.75rem; }
.p-body { flex: 1; margin: 0 .36rem .36rem .4rem; padding-top: 1rem; background: #fff6d9; }
.p-intro { display: flex; flex-direction: column; padding-left: 2.1rem; line-height: 1.6rem; }
.popup small { font-size: 1.245rem; }
.popup u { color: #1a0dcc; }
.p-rule { height: .2rem; margin: 1rem 1.1rem 0; border: 0; background: #fad25f; }
.p-rule-near { margin-top: 1.15rem; }
.form { display: grid; grid-template-columns: 16.9rem 25.85rem auto; column-gap: .5rem; text-align: right; line-height: 1.6rem; }
.field { height: 2.53rem; padding-left: .35rem; border: .13rem solid #767676; border-radius: .3rem; background: #fff; text-align: left; line-height: 2.3rem; }
.form-id { grid-template-columns: 16.9rem 25.85rem; grid-auto-rows: 3.07rem; margin-top: 1.27rem; }
.form-id .field { height: 2.56rem; }
.form-id .field-on { border: .2rem solid #1a6fe0; }
.alias { display: flex; align-items: center; height: 2.2rem; padding-left: 14.9rem; }
.checkbox { width: 1.6rem; height: 1.6rem; margin-right: 1rem; border-radius: .3rem; background: #0a75ff; }
.reply { padding: .35rem 0 0 17.4rem; line-height: 2.4rem; }
.btns { display: flex; }
.btn { height: 2.57rem; border: .13rem solid #767676; border-radius: .35rem; background: #efefef; line-height: 2.3rem; text-align: center; }
.btns-next { padding: 2.75rem 0 0 16.1rem; }
.btn-cancel { width: 6.95rem; }
.btn-next { width: 10.7rem; margin-left: .6rem; font-weight: 700; }
.p-config { padding: 1.2rem 0 0 2.1rem; line-height: 1.8rem; }
.form-smtp { grid-auto-rows: 2.87rem; margin-top: 2.15rem; }
.form-smtp .field { margin-left: -.2rem; }
.form-smtp label { padding-top: .1rem; }
.port { display: flex; margin-left: .4rem; line-height: 2.6rem; }
.select { display: flex; align-items: center; width: 5.3rem; height: 2.25rem; margin: .15rem 0 0 .55rem; padding-left: .55rem; border: .13rem solid #767676; border-radius: .3rem; background: #fff; }
.select svg { width: 1rem; height: .7rem; margin-left: .55rem; }
.secure { display: flex; align-items: center; height: 2.29rem; padding-left: 17.8rem; }
.secure-first { margin-top: .35rem; }
.radio-big { margin: -.4rem .4rem 0 0; }
.btns-add { padding: 3.1rem 0 0 14.3rem; }
.btn-back { width: 6.9rem; margin-left: 1.08rem; }
.btn-add { width: 13.25rem; margin-left: .65rem; border: .2rem solid #1a6fe0; font-weight: 700; line-height: 2.15rem; }
```
FILE: page.js
```js
// Fill the shared blocks from their templates.
document.querySelectorAll('[data-include]').forEach(function (slot) {
  slot.replaceWith(document.getElementById(slot.dataset.include).content.cloneNode(true));
});

// Message rows: "s" is a single-line message, "t" one with attachments.
var list = document.getElementById('list');
['s', 's', 't', 's', 't', 't', 't', 't', 't', 's'].forEach(function (size, n) {
  var row = document.createElement('div');
  row.className = 'msg' + (size === 't' ? ' msg-tall' : '');
  var mark = n === 1 ? '<svg><use href="#i-important"/></svg>' : '<svg class="hot"><use href="#i-marker"/></svg>';
  row.innerHTML = '<svg><use href="#i-check"/></svg><svg><use href="#i-star"/></svg>' + mark;
  list.insertBefore(row, list.lastElementChild);
});

// Censored message text: one digit per cell, 0 is the background, 9 the darkest.
var C = 15.22;
var rows = {
  0: '26654644660000002775452665658287651133254',
  1: '22231232220000001223121232212112231211222',
  3: '24543434540000002454313543253425765421332',
  4: '13433253430000001333222345432321234311222',
  6: '13320000000000001223132333211211323122112',
  7: '27630000000000002653855565433233534324343',
  13: '27831000000000002888758767287788776766686',
  14: '01000000000000000111111011111201111100111',
  16: '25177200000000002877765762662876777751444',
  17: '12222100000000001112210231110112211112111',
  22: '13320000000000001223132333211211323122112',
  23: '27630000000000002653855576433233534324343',
  29: '18775720000000003735887678769887689887777',
  30: '01110000000000001121111111011111111111111',
  35: '25540000000000002454545467667654044454544',
  36: '15540000000000001343444055556654033433233',
  41: '01010000000000000111212112111211112111111',
  42: '28761000000000002888758767677887776686877',
  48: '26655620000000002776588778665424443454444',
  49: '12232210000000001222122222122122212211112'
};
var seed = 7;
function rnd() { seed = (seed * 16807) % 2147483647; return seed / 2147483647; }
function shade(l, warm) {
  var w = warm ? 5 : 0;
  return 'rgb(' + (200 - l * 5.6 + w) + ',' + (204 - l * 5.7) + ',' + (212 - l * 5.9 - w) + ')';
}
var canvas = document.querySelector('.mosaic');
var g = canvas.getContext('2d');
g.fillStyle = '#c8ccd4';
g.fillRect(0, 0, 1214, 782);
function cell(c, k, color) {
  var x = Math.round(-4.5 + C * c), y = Math.round(9.6 + C * k);
  g.fillStyle = color;
  g.fillRect(x, y, Math.round(-4.5 + C * (c + 1)) - x, Math.round(9.6 + C * (k + 1)) - y);
}
g.fillStyle = '#a4b1d4';
g.fillRect(0, 0, 163, 10);
g.fillStyle = '#b3bdd6';
g.fillRect(163, 0, 15, 10);
Object.keys(rows).forEach(function (k) {
  var s = rows[k], sum = 0, c;
  for (c = 0; c < 41; c++) {
    if (+s[c]) cell(c, +k, shade(+s[c], s[c] > 6 && rnd() > .6));
    if (c > 16) sum += +s[c];
  }
  var mean = sum / 24 * .74;
  for (; c < 71; c++) cell(c, +k, shade(Math.max(.5, mean + (rnd() - .5) * mean * .9) * (k === '29' && c < 57 ? 1.35 : 1)));
  cell(71, +k, shade(.6));
  for (c = 76; c < 80; c++) cell(c, +k, shade(mean * [.4, .9, .8, .45][c - 76]));
});

// Attachment chips under the message text.
function chips(k, strength, colors, third) {
  cell(17, k, colors[2]); cell(18, k, colors[0]); cell(19, k, colors[2]);
  cell(31, k, colors[1]); cell(32, k, colors[1]);
  var c;
  for (c = 20; c < 28; c++) cell(c, k, shade(strength * (.7 + rnd() * .4)));
  for (c = 33; c < 42; c++) cell(c, k, shade(strength * (.6 + rnd() * .5)));
  if (third) {
    cell(44, k, colors[2]); cell(45, k, colors[0]); cell(46, k, colors[2]);
    for (c = 47; c < 55; c++) cell(c, k, shade(strength * (.6 + rnd() * .5)));
  }
}
var strong = ['#e0564d', '#e19794', '#ccb9bd'], soft = ['#d5a9ab', '#cfa8aa', '#c9bec5'], mid = ['#dd9290', '#d5a5a6', '#ccbcc1'];
var bright = ['#e25f56', '#dc817c', '#cfb0b3'], faint = ['#cabdc3', '#c9c0c6', '#c8c7cf'], blue = ['#92aee1', '#a4b7dc', '#b6c1d5'];
chips(9, 5, strong); chips(10, 1.5, soft);
chips(18, 1, soft); chips(19, 4.5, bright);
chips(25, 5, strong); chips(26, 1.5, soft);
chips(31, 1.8, mid); chips(32, 2.5, ['#ee8a82', '#e09c99', '#cfb3b7']);
chips(37, .3, faint, true); chips(38, 5, bright, true); chips(39, .7, soft, true);
chips(44, 3.2, blue, true); chips(45, 1.6, blue, true);

// Censored sender address in the settings table.
document.querySelectorAll('.strip').forEach(function (el) {
  var t = el.getContext('2d'), v;
  for (var i = 0; i < 24; i++) {
    v = i === 0 || i > 21 ? 232 : 200 + Math.round(rnd() * 26);
    t.fillStyle = 'rgb(' + v + ',' + v + ',' + (v + 2) + ')';
    t.fillRect(-6 + i * 15, 0, 15, 15);
    v = Math.min(248, v + 24);
    t.fillStyle = 'rgb(' + v + ',' + v + ',' + (v + 2) + ')';
    t.fillRect(-6 + i * 15, 15, 15, 12);
  }
});
```
